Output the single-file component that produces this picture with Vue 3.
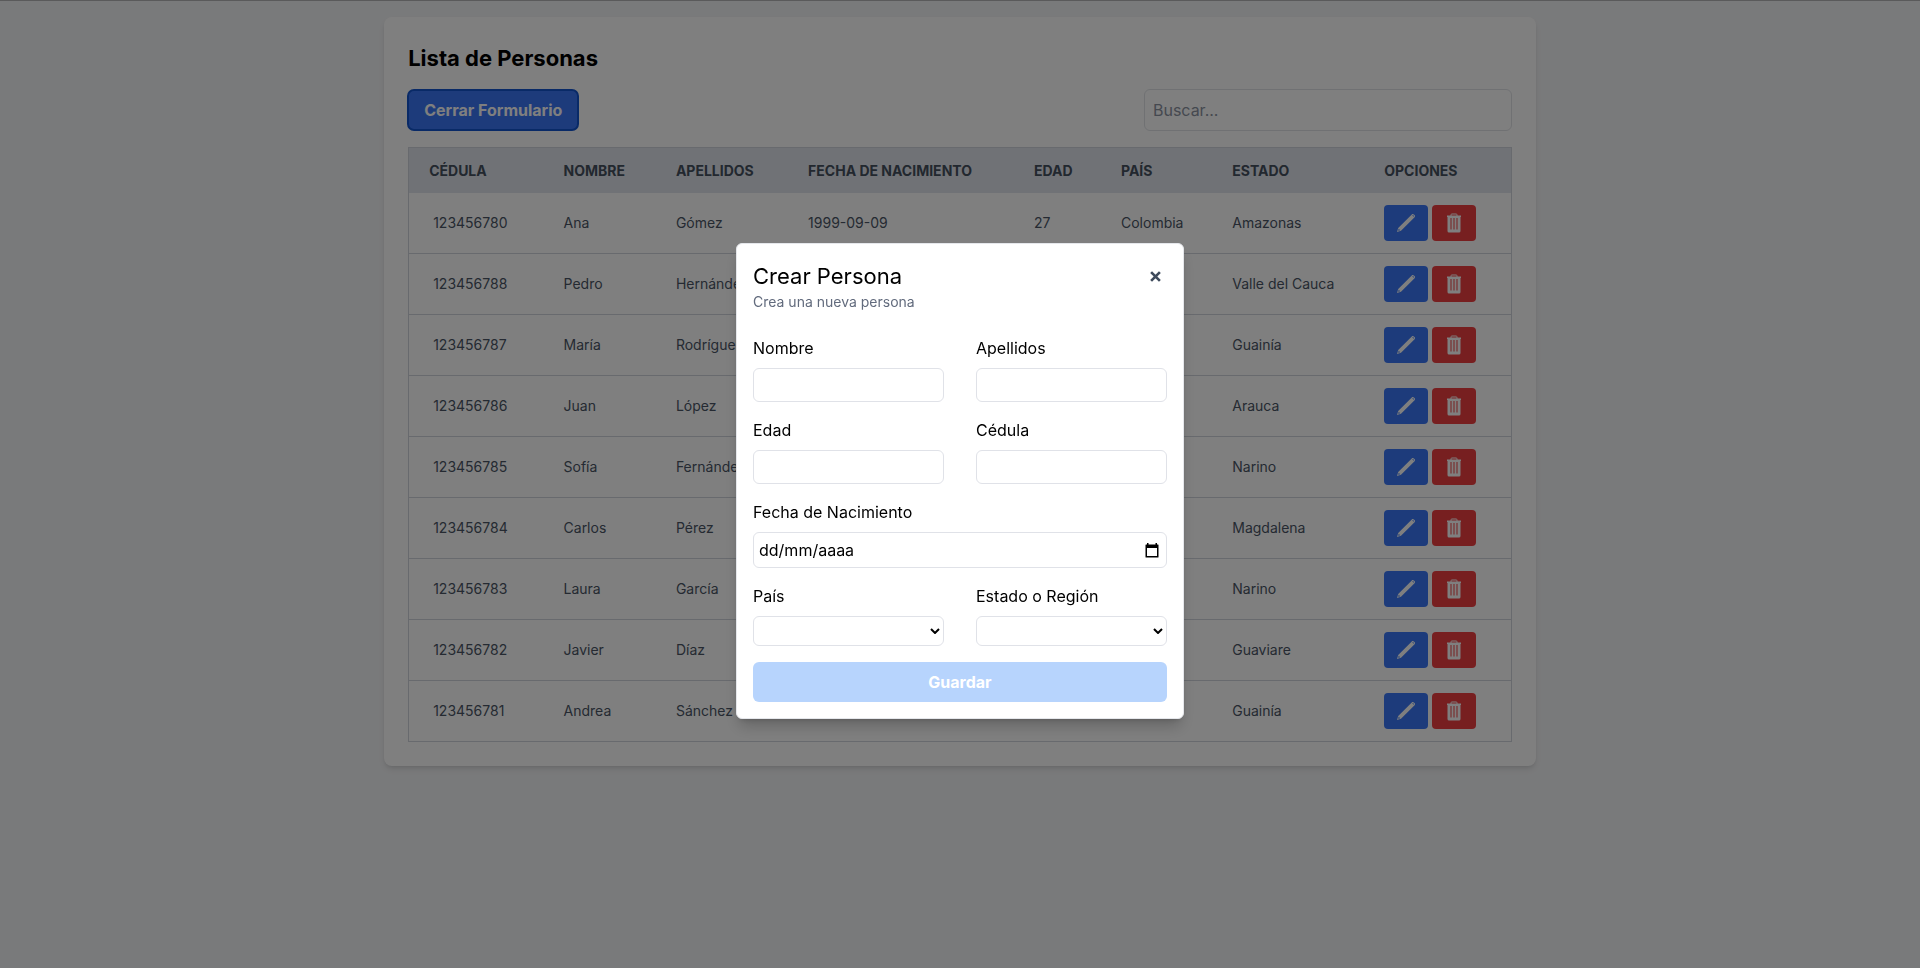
<script setup>
import { ref } from 'vue'

const search = ref('')
const columns = [
  { label: 'Cédula', cls: 'c-id' },
  { label: 'Nombre', cls: 'c-name' },
  { label: 'Apellidos', cls: 'c-last' },
  { label: 'Fecha de nacimiento', cls: 'c-date' },
  { label: 'Edad', cls: 'c-age' },
  { label: 'País', cls: 'c-country' },
  { label: 'Estado', cls: 'c-state' },
  { label: 'Opciones', cls: 'c-opts' },
]
const people = [
  ['123456780', 'Ana', 'Gómez', '1999-09-09', '27', 'Colombia', 'Amazonas'],
  ['123456788', 'Pedro', 'Hernández', '', '', '', 'Valle del Cauca'],
  ['123456787', 'María', 'Rodríguez', '', '', '', 'Guainía'],
  ['123456786', 'Juan', 'López', '', '', '', 'Arauca'],
  ['123456785', 'Sofía', 'Fernández', '', '', '', 'Narino'],
  ['123456784', 'Carlos', 'Pérez', '', '', '', 'Magdalena'],
  ['123456783', 'Laura', 'García', '', '', '', 'Narino'],
  ['123456782', 'Javier', 'Díaz', '', '', '', 'Guaviare'],
  ['123456781', 'Andrea', 'Sánchez', '', '', '', 'Guainía'],
]
</script>

<template>
  <div class="page">
    <main class="card">
      <h1>Lista de Personas</h1>
      <div class="toolbar">
        <button type="button" class="toggle">Cerrar Formulario</button>
        <input v-model="search" class="search" type="text" placeholder="Buscar..." aria-label="Buscar" />
      </div>
      <table>
        <colgroup>
          <col v-for="c in columns" :key="c.cls" :class="c.cls" />
        </colgroup>
        <thead>
          <tr>
            <th v-for="c in columns" :key="c.cls" scope="col">{{ c.label }}</th>
          </tr>
        </thead>
        <tbody>
          <tr v-for="p in people" :key="p[0]">
            <td v-for="(v, i) in p" :key="i">{{ v }}</td>
            <td>
              <div class="actions">
                <button type="button" class="edit" aria-label="Editar">
                  <svg viewBox="0 0 20 20" width="20" height="20" fill="currentColor">
                    <path fill-rule="evenodd" d="M15.8 1.4 C16.4 .8 17.2 .8 17.9 1.5 L18.5 2.1 C19.2 2.8 19.2 3.6 18.6 4.2 L5 17.8 L1 19 L2.2 15 Z M16.3 2.4 L17.6 3.7 L18 3.1 L16.9 2 Z M2.7 15.8 L2.2 17.8 L4.2 17.3 Z" />
                  </svg>
                </button>
                <button type="button" class="remove" aria-label="Eliminar">
                  <svg viewBox="0 0 20 20" width="20" height="20" fill="none" stroke="currentColor">
                    <path d="M7 3 V1.8 Q7 1 7.8 1 H12.2 Q13 1 13 1.8 V3" />
                    <path fill="currentColor" stroke="none" fill-rule="evenodd" d="M3 2.5 H17 V4 H16.5 V18 Q16.5 19.5 15 19.5 H5 Q3.5 19.5 3.5 18 V4 H3 Z M6.5 5 V16.5 H7.5 V5 Z M9.5 5 V16.5 H10.5 V5 Z M12.5 5 V16.5 H13.5 V5 Z" />
                  </svg>
                </button>
              </div>
            </td>
          </tr>
        </tbody>
      </table>
    </main>

    <div class="overlay">
      <form class="modal" role="dialog" aria-labelledby="dialog-title" @submit.prevent>
        <header>
          <div>
            <h2 id="dialog-title">Crear Persona</h2>
            <p>Crea una nueva persona</p>
          </div>
          <button type="button" class="close" aria-label="Cerrar">
            <svg viewBox="0 0 10 10" width="11" height="11" fill="none" stroke="currentColor" stroke-width="2.4">
              <path d="M1 1 L9 9 M9 1 L1 9" />
            </svg>
          </button>
        </header>
        <div class="fields">
          <div class="field">
            <label for="nombre">Nombre</label>
            <input id="nombre" type="text" />
          </div>
          <div class="field">
            <label for="apellidos">Apellidos</label>
            <input id="apellidos" type="text" />
          </div>
          <div class="field">
            <label for="edad">Edad</label>
            <input id="edad" type="text" />
          </div>
          <div class="field">
            <label for="cedula">Cédula</label>
            <input id="cedula" type="text" />
          </div>
          <div class="field wide">
            <label for="fecha">Fecha de Nacimiento</label>
            <div class="date">
              <input id="fecha" type="text" placeholder="dd/mm/aaaa" />
              <button type="button" aria-label="Abrir calendario">
                <svg viewBox="0 0 14 15" width="14" height="15">
                  <path fill="currentColor" fill-rule="evenodd" d="M2 0 H3.5 V1.5 H10.5 V0 H12 V1.5 H13 Q13.5 1.5 13.5 2 V14 Q13.5 14.5 13 14.5 H1 Q.5 14.5 .5 14 V2 Q.5 1.5 1 1.5 H2 Z M2 5 V13 H12 V5 Z" />
                </svg>
              </button>
            </div>
          </div>
          <div class="field">
            <label for="pais">País</label>
            <div class="select">
              <select id="pais"></select>
              <svg viewBox="0 0 10 6" width="10" height="6"><path d="M1 1 L5 5 L9 1" /></svg>
            </div>
          </div>
          <div class="field">
            <label for="estado">Estado o Región</label>
            <div class="select">
              <select id="estado"></select>
              <svg viewBox="0 0 10 6" width="10" height="6"><path d="M1 1 L5 5 L9 1" /></svg>
            </div>
          </div>
          <button type="submit" class="save wide" disabled>Guardar</button>
        </div>
      </form>
    </div>
  </div>
</template>

<style>
body {
  background: #f3f4f6;
}
</style>

<style scoped>
* {
  box-sizing: border-box;
}
.page {
  min-height: 100vh;
  padding: 16px;
  border-top: 1px solid #b4b4b6;
  font-family: Inter, "Liberation Sans", sans-serif;
  font-size: 16px;
  line-height: 24px;
  color: #000;
}
h1,
h2,
p {
  margin: 0;
}
button,
input,
select {
  margin: 0;
  font: inherit;
  color: inherit;
}
.card {
  width: 61%;
  margin: 0 auto;
  padding: 24px;
  background: #fff;
  border-radius: 8px;
  box-shadow: 0 4px 6px -1px rgba(0, 0, 0, 0.1), 0 2px 4px -2px rgba(0, 0, 0, 0.1);
}
h1 {
  margin-bottom: 14px;
  font-size: 22px;
  line-height: 34px;
  font-weight: 700;
}
.toolbar {
  display: flex;
  align-items: center;
  justify-content: space-between;
  margin-bottom: 16px;
}
.toggle {
  padding: 8px 16px;
  border: 0;
  border-radius: 6px;
  background: #3a77f7;
  color: #fff;
  font-weight: 700;
  outline: 2px solid #1355cf;
  outline-offset: -1px;
}
.search {
  width: 33.3333%;
  height: 42px;
  padding: 8px;
  border: 1px solid #e1e3e7;
  border-radius: 6px;
  background: #fff;
}
.search::placeholder {
  color: #8b92a0;
  opacity: 1;
}
table {
  width: 100%;
  table-layout: fixed;
  border-collapse: separate;
  border-spacing: 0;
  border: 1px solid #d1d5dc;
  border-bottom: 0;
  font-size: 14px;
  line-height: 20px;
  color: #4a5565;
}
.c-id { width: 12.2%; }
.c-name { width: 10.2%; }
.c-last { width: 12%; }
.c-date { width: 20.5%; }
.c-age { width: 7.9%; }
.c-country { width: 10.1%; }
.c-state { width: 13.8%; }
.c-opts { width: 13.3%; }
th {
  padding: 13px 20px 12px;
  background: #e1e4ec;
  color: #45505e;
  text-align: left;
  text-transform: uppercase;
  font-weight: 700;
}
td {
  height: 61px;
  padding: 12px 20px;
  border-bottom: 1px solid #d1d5dc;
}
td:first-child {
  padding-left: 24px;
}
.actions {
  display: flex;
  gap: 4px;
}
.actions button {
  display: grid;
  place-items: center;
  width: 44px;
  height: 36px;
  padding: 0;
  border: 0;
  border-radius: 4px;
  color: #fff;
}
.edit {
  background: #3a77f7;
}
.remove {
  background: #ef3e40;
}
.overlay {
  position: fixed;
  inset: 0;
  display: flex;
  align-items: center;
  justify-content: center;
  padding-bottom: 6px;
  background: rgba(0, 0, 0, 0.5);
}
.modal {
  width: 448px;
  padding: 16px;
  border: 1px solid #e5e7eb;
  border-radius: 6px;
  background: #fff;
  box-shadow: 0 10px 15px -3px rgba(0, 0, 0, 0.2), 0 4px 6px -4px rgba(0, 0, 0, 0.2);
}
header {
  display: flex;
  justify-content: space-between;
  align-items: flex-start;
  margin-bottom: 24px;
}
h2 {
  font-size: 22px;
  line-height: 32px;
  font-weight: 400;
}
header p {
  font-size: 14px;
  line-height: 20px;
  color: #626b7d;
}
.close {
  display: grid;
  place-items: center;
  width: 24px;
  height: 32px;
  padding: 0;
  border: 0;
  background: none;
  color: #3f4b5c;
}
.fields {
  display: grid;
  grid-template-columns: 1fr 1fr;
  gap: 16px 32px;
}
.field {
  display: flex;
  flex-direction: column;
  gap: 8px;
}
.wide {
  grid-column: 1 / -1;
}
.field > input,
.date,
select {
  width: 100%;
  height: 34px;
  padding: 4px;
  border: 1px solid #e0e2e8;
  border-radius: 6px;
  background: #fff;
}
.date {
  display: flex;
  align-items: center;
  height: 36px;
}
.date input {
  flex: 1;
  min-width: 0;
  padding: 0 1px;
  border: 0;
  background: none;
}
.date input::placeholder {
  color: #000;
  opacity: 1;
}
.date button {
  display: grid;
  place-items: center;
  width: 20px;
  height: 24px;
  padding: 0;
  border: 0;
  background: none;
}
.select {
  display: grid;
  align-items: center;
  justify-items: end;
}
.select > * {
  grid-area: 1 / 1;
}
select {
  height: 30px;
  appearance: none;
}
.select svg {
  margin-right: 4px;
  fill: none;
  stroke: #000;
  stroke-width: 2;
  pointer-events: none;
}
.save {
  padding: 8px;
  border: 0;
  border-radius: 6px;
  background: #b7d4fd;
  color: #fff;
  font-weight: 700;
}
</style>
